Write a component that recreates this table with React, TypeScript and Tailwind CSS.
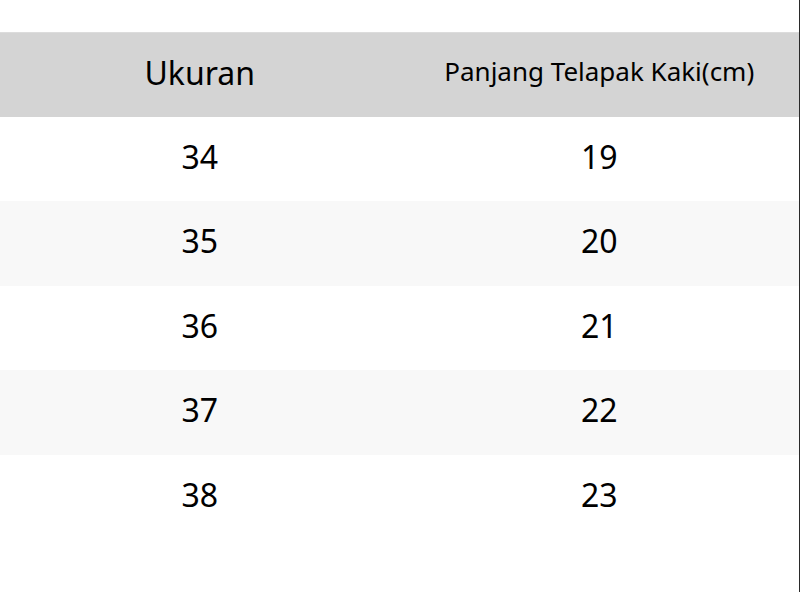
import React from "react";

const rows = [
  ["34", "19"],
  ["35", "20"],
  ["36", "21"],
  ["37", "22"],
  ["38", "23"],
];

export default function App() {
  return (
    <div
      className="w-[800px] h-[592px] bg-white text-black border-r border-[#2a2a2a] pt-8"
      style={{ fontFamily: '"Noto Sans", "Open Sans", sans-serif' }}
    >
      <div className="grid grid-cols-2 h-[84.5px] bg-[#d4d4d4] border-t border-[#dcdcdc]">
        <div className="flex items-center justify-center text-[32px] pb-1">Ukuran</div>
        <div className="flex items-center justify-center text-[26px] pb-[6px]">
          Panjang Telapak Kaki(cm)
        </div>
      </div>
      {rows.map(([size, len], i) => (
        <div
          key={size}
          className={`grid grid-cols-2 h-[84.5px] ${i % 2 === 1 ? "bg-[#f8f8f8]" : "bg-white"}`}
        >
          <div className="flex items-center justify-center text-[32px] pb-1">{size}</div>
          <div className="flex items-center justify-center text-[32px] pb-1">{len}</div>
        </div>
      ))}
    </div>
  );
}
